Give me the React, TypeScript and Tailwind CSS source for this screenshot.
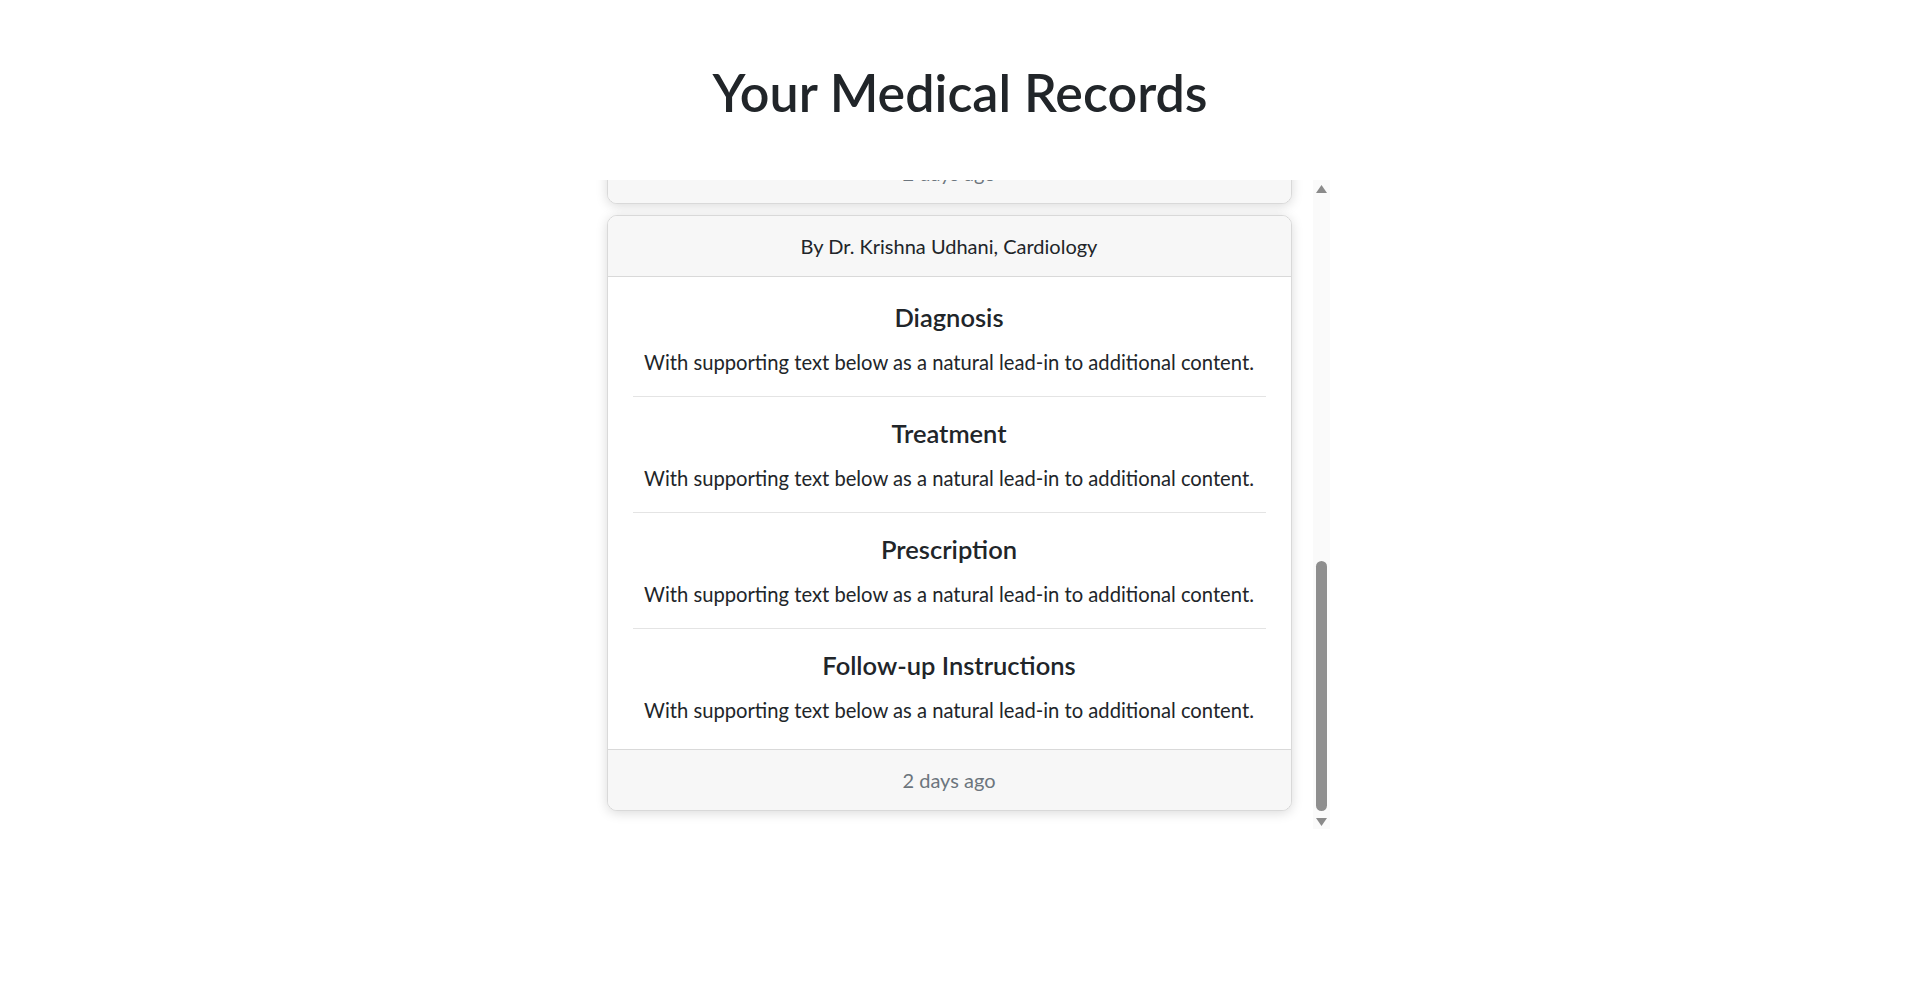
import { useLayoutEffect, useRef } from 'react'

const sections = ['Diagnosis', 'Treatment', 'Prescription', 'Follow-up Instructions']
const blurb = 'With supporting text below as a natural lead-in to additional content.'

const records = [
  { doctor: 'Dr. Krishna Udhani, Cardiology', items: ['Diagnosis', 'Prescription'], when: '2 days ago' },
  { doctor: 'Dr. Krishna Udhani, Cardiology', items: sections, when: '2 days ago' },
  { doctor: 'Dr. Krishna Udhani, Cardiology', items: sections, when: '2 days ago' },
]

function RecordCard({ doctor, items, when }: { doctor: string; items: string[]; when: string }) {
  return (
    <div className="mb-[11px] overflow-hidden rounded-[10px] border border-[#d9d9d9] bg-white shadow-[0_2px_12px_rgba(0,0,0,0.15)] last:mb-0">
      <div className="border-b border-[#d9d9d9] bg-[#f7f7f7] py-[15px] text-center text-[20px] leading-[30px] text-[#212529]">
        By {doctor}
      </div>
      <div className="px-[25px] pt-[4px] pb-[5px]">
        {items.map((title) => (
          <div key={title} className="border-b border-[#e4e4e4] pt-[21px] pb-[19px] text-center last:border-b-0">
            <h5 className="text-[25.5px] leading-[30px] font-semibold text-[#212529]">{title}</h5>
            <p className="mt-[15px] text-[20.2px] leading-[30px] text-[#212529]">{blurb}</p>
          </div>
        ))}
      </div>
      <div className="border-t border-[#d9d9d9] bg-[#f7f7f7] py-[15px] text-center text-[20px] leading-[30px] text-[#6c757d]">
        {when}
      </div>
    </div>
  )
}

// drawn scrollbar, the headless browser hides native ones
function ScrollBar() {
  return (
    <div className="flex h-[649px] w-[17px] flex-col bg-[#fafafa]">
      <div className="flex h-[15px] items-end justify-center pb-[2px]">
        <svg width="11" height="8" viewBox="0 0 11 8">
          <polygon points="5.5,0 11,8 0,8" fill="#8a8a8a" />
        </svg>
      </div>
      <div className="flex-1">
        <div className="mx-auto mt-[366px] h-[250px] w-[11px] rounded-full bg-[#8e8e8e]" />
      </div>
      <div className="flex h-[15px] items-start justify-center pt-[4px]">
        <svg width="11" height="8" viewBox="0 0 11 8">
          <polygon points="0,0 11,0 5.5,8" fill="#8a8a8a" />
        </svg>
      </div>
    </div>
  )
}

export default function App() {
  const listRef = useRef<HTMLDivElement>(null)

  useLayoutEffect(() => {
    const el = listRef.current
    if (el) el.scrollTop = el.scrollHeight
  }, [])

  return (
    <div className="min-h-screen bg-white pt-[62px] font-['Lato',sans-serif]">
      <h1 className="mb-[58px] text-center text-[52px] leading-[60px] font-semibold text-[#212529]">
        Your Medical Records
      </h1>
      <div className="mx-auto flex w-[747px]">
        <div
          ref={listRef}
          className="h-[649px] w-[726px] overflow-y-scroll pt-[3px] pr-[21px] pb-[18px] pl-[20px] [scrollbar-width:none]"
        >
          {records.map((r, i) => (
            <RecordCard key={i} {...r} />
          ))}
        </div>
        <ScrollBar />
      </div>
    </div>
  )
}
